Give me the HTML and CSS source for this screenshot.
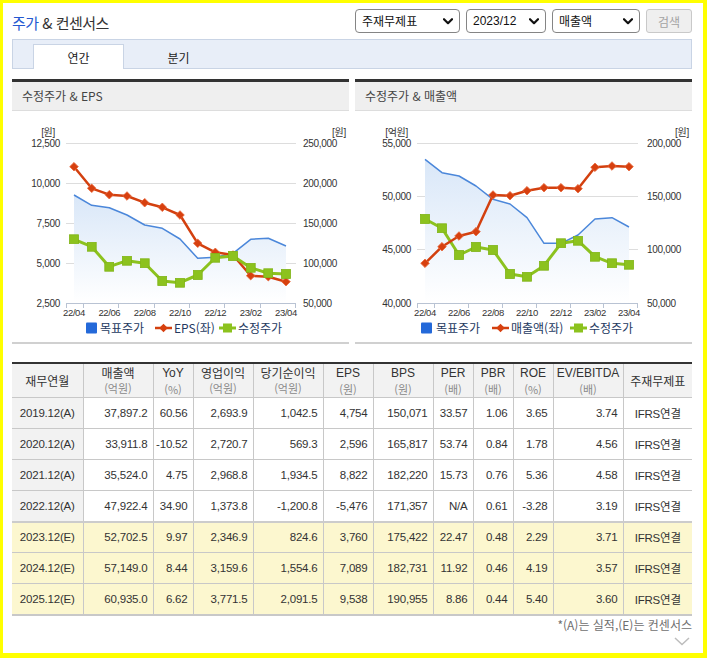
FILE: index.html
```html
<!DOCTYPE html>
<html lang="ko">
<head>
<meta charset="utf-8">
<title>주가 &amp; 컨센서스</title>
<link rel="stylesheet" href="styles.css">
</head>
<body>
<div class="frame">
  <div class="topbar">
    <h2 class="title"><span class="accent">주가</span> &amp; 컨센서스</h2>
    <div class="controls">
      <div class="sel sel-a"><span>주재무제표</span><svg class="caret" width="10" height="7" viewBox="0 0 10 7"><polyline points="1,1.2 5,5.2 9,1.2"/></svg></div>
      <div class="sel sel-b"><span class="num">2023/12</span><svg class="caret" width="10" height="7" viewBox="0 0 10 7"><polyline points="1,1.2 5,5.2 9,1.2"/></svg></div>
      <div class="sel sel-c"><span>매출액</span><svg class="caret" width="10" height="7" viewBox="0 0 10 7"><polyline points="1,1.2 5,5.2 9,1.2"/></svg></div>
      <div class="btn">검색</div>
    </div>
  </div>

  <div class="tabs">
    <div class="tab active">연간</div>
    <div class="tab">분기</div>
  </div>

  <div class="charts">
    <div class="panel">
      <div class="panel-head">수정주가 &amp; EPS</div>
      <svg class="chart" width="337" height="231" viewBox="0 0 337 231">
        <defs>
          <linearGradient id="areaFill" x1="0" y1="0" x2="0" y2="1">
            <stop offset="0" stop-color="#d9e7f8"/>
            <stop offset="1" stop-color="#ffffff"/>
          </linearGradient>
          <marker id="dia" viewBox="-5 -5 10 10" markerWidth="10" markerHeight="10" markerUnits="userSpaceOnUse" refX="0" refY="0">
            <path d="M0,-4.3 L4.3,0 L0,4.3 L-4.3,0Z" fill="#d7400f" stroke="#e8683c" stroke-width="0.8"/>
          </marker>
          <marker id="sq" viewBox="-5 -5 10 10" markerWidth="10" markerHeight="10" markerUnits="userSpaceOnUse" refX="0" refY="0">
            <rect x="-4.5" y="-4.5" width="9" height="9" fill="#8cc21e" stroke="#7fb316" stroke-width="0.8"/>
          </marker>
        </defs>
        <g class="grid">
          <line x1="54" y1="32.5" x2="284" y2="32.5"/>
          <line x1="54" y1="72.5" x2="284" y2="72.5"/>
          <line x1="54" y1="112.5" x2="284" y2="112.5"/>
          <line x1="54" y1="152.5" x2="284" y2="152.5"/>
        </g>
        <polygon class="area" points="62,84 79.7,94.3 97.3,96.7 115,104 132.7,114 150.3,117.3 168,128 185.7,147.3 203.3,146.3 221,142.3 238.7,128.3 256.3,127.3 274,135 274,192 62,192"/>
        <g class="axis">
          <line x1="54" y1="192.5" x2="284" y2="192.5"/>
          <line x1="54.5" y1="192" x2="54.5" y2="197"/>
          <line x1="71.5" y1="192" x2="71.5" y2="197"/>
          <line x1="106.5" y1="192" x2="106.5" y2="197"/>
          <line x1="142.5" y1="192" x2="142.5" y2="197"/>
          <line x1="177.5" y1="192" x2="177.5" y2="197"/>
          <line x1="212.5" y1="192" x2="212.5" y2="197"/>
          <line x1="248.5" y1="192" x2="248.5" y2="197"/>
          <line x1="283.5" y1="192" x2="283.5" y2="197"/>
        </g>
        <polyline class="l-blue" points="62,84 79.7,94.3 97.3,96.7 115,104 132.7,114 150.3,117.3 168,128 185.7,147.3 203.3,146.3 221,142.3 238.7,128.3 256.3,127.3 274,135"/>
        <polyline class="l-red" points="62,55.7 79.7,77.3 97.3,83.7 115,85 132.7,91.7 150.3,96.3 168,104 185.7,132.3 203.3,141.3 221,144 238.7,164.7 256.3,165.7 274,170.7"/>
        <polyline class="l-green" points="62,128.3 79.7,135.7 97.3,155.7 115,149.7 132.7,152.3 150.3,170 168,171.7 185.7,164 203.3,146.7 221,145 238.7,156.7 256.3,162.3 274,163"/>
        <text class="unit" x="43" y="25" text-anchor="end">[원]</text>
        <text class="unit" x="320" y="25">[원]</text>
        <g class="ax" text-anchor="end">
          <text x="48" y="36">12,500</text>
          <text x="48" y="76">10,000</text>
          <text x="48" y="116">7,500</text>
          <text x="48" y="156">5,000</text>
          <text x="48" y="196">2,500</text>
        </g>
        <g class="ax">
          <text x="291" y="36">250,000</text>
          <text x="291" y="76">200,000</text>
          <text x="291" y="116">150,000</text>
          <text x="291" y="156">100,000</text>
          <text x="291" y="196">50,000</text>
        </g>
        <g class="xl" text-anchor="middle">
          <text x="62" y="205">22/04</text>
          <text x="97.3" y="205">22/06</text>
          <text x="132.7" y="205">22/08</text>
          <text x="168" y="205">22/10</text>
          <text x="203.3" y="205">22/12</text>
          <text x="238.7" y="205">23/02</text>
          <text x="274" y="205">23/04</text>
        </g>
        <g class="legend">
          <rect x="74" y="211.5" width="11" height="11" rx="1" fill="#2469d9"/>
          <text x="88" y="221.5">목표주가</text>
          <polyline class="l-red" points="143,217 151.5,217 160,217" marker-start="none" marker-end="none"/>
          <path d="M151.5,212.7 L155.8,217 L151.5,221.3 L147.2,217Z" fill="#d7400f"/>
          <text x="162" y="221.5">EPS(좌)</text>
          <line class="lg-green" x1="207" y1="217" x2="224" y2="217"/>
          <rect x="211" y="212.5" width="9" height="9" fill="#8cc21e"/>
          <text x="226" y="221.5">수정주가</text>
        </g>
      </svg>
    </div>

    <div class="panel">
      <div class="panel-head">수정주가 &amp; 매출액</div>
      <svg class="chart" width="337" height="231" viewBox="0 0 337 231">
        <g class="grid">
          <line x1="62" y1="32.5" x2="283" y2="32.5"/>
          <line x1="62" y1="85.5" x2="283" y2="85.5"/>
          <line x1="62" y1="138.5" x2="283" y2="138.5"/>
        </g>
        <polygon class="area" points="70,48.3 87,61.7 104,65 121,75 138,88.3 155,93 172,106.7 189,132.3 206,132.3 223,124 240,108 257,106.7 274,116 274,192 70,192"/>
        <g class="axis">
          <line x1="62" y1="192.5" x2="283" y2="192.5"/>
          <line x1="62.5" y1="192" x2="62.5" y2="197"/>
          <line x1="79.5" y1="192" x2="79.5" y2="197"/>
          <line x1="113.5" y1="192" x2="113.5" y2="197"/>
          <line x1="147.5" y1="192" x2="147.5" y2="197"/>
          <line x1="181.5" y1="192" x2="181.5" y2="197"/>
          <line x1="215.5" y1="192" x2="215.5" y2="197"/>
          <line x1="248.5" y1="192" x2="248.5" y2="197"/>
          <line x1="282.5" y1="192" x2="282.5" y2="197"/>
        </g>
        <polyline class="l-blue" points="70,48.3 87,61.7 104,65 121,75 138,88.3 155,93 172,106.7 189,132.3 206,132.3 223,124 240,108 257,106.7 274,116"/>
        <polyline class="l-green" points="70,108 87,117.3 104,144 121,136 138,139 155,163 172,165.7 189,154.7 206,132.3 223,129.7 240,145.7 257,152.3 274,153.7"/>
        <polyline class="l-red" points="70,152.3 87,135.7 104,125 121,120.7 138,84 155,84.7 172,79.7 189,76.7 206,76.7 223,77.7 240,56.3 257,55 274,55.7"/>
        <text class="unit" x="53" y="25" text-anchor="end">[억원]</text>
        <text class="unit" x="320" y="25">[원]</text>
        <g class="ax" text-anchor="end">
          <text x="56" y="36">55,000</text>
          <text x="56" y="89">50,000</text>
          <text x="56" y="142">45,000</text>
          <text x="56" y="196">40,000</text>
        </g>
        <g class="ax">
          <text x="292" y="36">200,000</text>
          <text x="292" y="89">150,000</text>
          <text x="292" y="142">100,000</text>
          <text x="292" y="196">50,000</text>
        </g>
        <g class="xl" text-anchor="middle">
          <text x="70" y="205">22/04</text>
          <text x="104" y="205">22/06</text>
          <text x="138" y="205">22/08</text>
          <text x="172" y="205">22/10</text>
          <text x="206" y="205">22/12</text>
          <text x="240" y="205">23/02</text>
          <text x="274" y="205">23/04</text>
        </g>
        <g class="legend">
          <rect x="66" y="211.5" width="11" height="11" rx="1" fill="#2469d9"/>
          <text x="81" y="221.5">목표주가</text>
          <line class="lg-red" x1="137" y1="217" x2="154" y2="217"/>
          <path d="M145.5,212.7 L149.8,217 L145.5,221.3 L141.2,217Z" fill="#d7400f"/>
          <text x="156" y="221.5">매출액(좌)</text>
          <line class="lg-green" x1="215" y1="217" x2="232" y2="217"/>
          <rect x="219" y="212.5" width="9" height="9" fill="#8cc21e"/>
          <text x="234" y="221.5">수정주가</text>
        </g>
      </svg>
    </div>
  </div>

  <table class="fin">
    <colgroup>
      <col class="c71"><col class="c70"><col class="c40"><col class="c60"><col class="c70"><col class="c50">
      <col class="c60"><col class="c40"><col class="c40"><col class="c40"><col class="c70"><col class="c69">
    </colgroup>
    <thead>
      <tr>
        <th>재무연월</th>
        <th>매출액<br><span class="u">(억원)</span></th>
        <th><span class="en">YoY</span><br><span class="u">(%)</span></th>
        <th>영업이익<br><span class="u">(억원)</span></th>
        <th>당기순이익<br><span class="u">(억원)</span></th>
        <th><span class="en">EPS</span><br><span class="u">(원)</span></th>
        <th><span class="en">BPS</span><br><span class="u">(원)</span></th>
        <th><span class="en">PER</span><br><span class="u">(배)</span></th>
        <th><span class="en">PBR</span><br><span class="u">(배)</span></th>
        <th><span class="en">ROE</span><br><span class="u">(%)</span></th>
        <th><span class="en">EV/EBITDA</span><br><span class="u">(배)</span></th>
        <th>주재무제표</th>
      </tr>
    </thead>
    <tbody>
      <tr><td>2019.12(A)</td><td>37,897.2</td><td>60.56</td><td>2,693.9</td><td>1,042.5</td><td>4,754</td><td>150,071</td><td>33.57</td><td>1.06</td><td>3.65</td><td>3.74</td><td>IFRS연결</td></tr>
      <tr><td>2020.12(A)</td><td>33,911.8</td><td>-10.52</td><td>2,720.7</td><td>569.3</td><td>2,596</td><td>165,817</td><td>53.74</td><td>0.84</td><td>1.78</td><td>4.56</td><td>IFRS연결</td></tr>
      <tr><td>2021.12(A)</td><td>35,524.0</td><td>4.75</td><td>2,968.8</td><td>1,934.5</td><td>8,822</td><td>182,220</td><td>15.73</td><td>0.76</td><td>5.36</td><td>4.58</td><td>IFRS연결</td></tr>
      <tr><td>2022.12(A)</td><td>47,922.4</td><td>34.90</td><td>1,373.8</td><td>-1,200.8</td><td>-5,476</td><td>171,357</td><td>N/A</td><td>0.61</td><td>-3.28</td><td>3.19</td><td>IFRS연결</td></tr>
      <tr class="est first-est"><td>2023.12(E)</td><td>52,702.5</td><td>9.97</td><td>2,346.9</td><td>824.6</td><td>3,760</td><td>175,422</td><td>22.47</td><td>0.48</td><td>2.29</td><td>3.71</td><td>IFRS연결</td></tr>
      <tr class="est"><td>2024.12(E)</td><td>57,149.0</td><td>8.44</td><td>3,159.6</td><td>1,554.6</td><td>7,089</td><td>182,731</td><td>11.92</td><td>0.46</td><td>4.19</td><td>3.57</td><td>IFRS연결</td></tr>
      <tr class="est"><td>2025.12(E)</td><td>60,935.0</td><td>6.62</td><td>3,771.5</td><td>2,091.5</td><td>9,538</td><td>190,955</td><td>8.86</td><td>0.44</td><td>5.40</td><td>3.60</td><td>IFRS연결</td></tr>
    </tbody>
  </table>
  <div class="note">*(A)는 실적,(E)는 컨센서스</div>
  <div class="more"><svg width="16" height="9" viewBox="0 0 16 9"><polyline points="1,1 8,7.5 15,1"/></svg></div>
</div>
</body>
</html>
```

FILE: styles.css
```css
* { box-sizing: border-box; }
html, body { margin: 0; padding: 0; }
body {
  background: #ffff00;
  width: 707px;
  height: 658px;
  overflow: hidden;
  font-family: "Liberation Sans", "Noto Sans CJK KR", sans-serif;
  color: #333;
}
.frame {
  margin: 3px 0 0 3px;
  width: 700px;
  height: 650px;
  background: #fff;
  padding: 6px 11px 0 9px;
}

/* top bar */
.topbar {
  display: flex;
  justify-content: space-between;
  align-items: center;
  height: 24px;
}
.title {
  margin: 0;
  padding-top: 4px;
  font-family: "Noto Sans CJK KR", sans-serif;
  font-weight: normal;
  font-size: 15px;
  line-height: 20px;
  letter-spacing: -0.5px;
  color: #333;
}
.accent { color: #2458d1; }
.controls {
  display: flex;
  gap: 6px;
}
.sel {
  height: 24px;
  border: 1px solid #858585;
  border-radius: 4px;
  background: #fff;
  display: flex;
  align-items: center;
  justify-content: space-between;
  padding: 0 6px 0 6px;
  font-family: "Noto Sans CJK KR", sans-serif;
  font-size: 12px;
  line-height: 14px;
  color: #111;
}
.sel .num { font-family: "Liberation Sans", sans-serif; font-size: 12px; }
.sel-a { width: 105px; }
.sel-b { width: 80px; }
.sel-c { width: 88px; }
.caret { display: block; }
.caret polyline { fill: none; stroke: #111; stroke-width: 2.2; stroke-linecap: round; stroke-linejoin: round; }
.btn {
  width: 46px;
  height: 24px;
  border: 1px solid #c9c9c9;
  border-radius: 3px;
  background: #efefef;
  color: #a3a3a3;
  font-family: "Noto Sans CJK KR", sans-serif;
  font-size: 12px;
  display: flex;
  align-items: center;
  justify-content: center;
}

/* tabs */
.tabs {
  margin-top: 6px;
  height: 30px;
  background: #e8eef8;
  border: 1px solid #c9d4e5;
  display: flex;
  align-items: flex-end;
  padding-left: 20px;
  gap: 9px;
}
.tab {
  width: 91px;
  height: 25px;
  margin-bottom: -1px;
  display: flex;
  align-items: center;
  justify-content: center;
  font-family: "Noto Sans CJK KR", sans-serif;
  font-size: 12px;
  color: #222;
  border: 1px solid transparent;
  border-bottom: none;
}
.tab.active {
  background: #fff;
  border-color: #c9d4e5;
}

/* chart panels */
.charts {
  margin-top: 10px;
  display: flex;
  gap: 6px;
}
.panel {
  width: 337px;
  border-top: 3px solid #333;
  border-bottom: 2px solid #d0d0d0;
}
.panel-head {
  height: 29px;
  background: #efefef;
  border-bottom: 1px solid #dddddd;
  padding-left: 10px;
  font-family: "Noto Sans CJK KR", sans-serif;
  font-size: 12px;
  line-height: 28px;
  color: #444;
}
.chart { display: block; }
.grid line { stroke: #dddddd; stroke-width: 1; }
.axis line { stroke: #b9c3d3; stroke-width: 1; }
.area { fill: url(#areaFill); stroke: none; }
.l-blue { fill: none; stroke: #4b87da; stroke-width: 1.5; stroke-linejoin: round; }
.l-red { fill: none; stroke: #d3400f; stroke-width: 2.5; stroke-linejoin: round; marker-start: url(#dia); marker-mid: url(#dia); marker-end: url(#dia); }
.l-green { fill: none; stroke: #8cc21e; stroke-width: 3; stroke-linejoin: round; marker-start: url(#sq); marker-mid: url(#sq); marker-end: url(#sq); }
.legend .l-red { marker-start: none; marker-mid: none; marker-end: none; }
.lg-red { stroke: #d3400f; stroke-width: 2.5; }
.lg-green { stroke: #8cc21e; stroke-width: 3; }
.ax text, .unit {
  font-family: "Liberation Sans", "Noto Sans CJK KR", sans-serif;
  font-size: 10px;
  letter-spacing: -0.3px;
  fill: #333;
}
.xl text {
  font-family: "Liberation Sans", sans-serif;
  font-size: 9.5px;
  letter-spacing: -0.4px;
  fill: #333;
}
.legend text {
  font-family: "Noto Sans CJK KR", sans-serif;
  font-size: 12px;
  fill: #24395f;
}

/* table */
.fin {
  margin-top: 18px;
  width: 680px;
  table-layout: fixed;
  border-collapse: collapse;
  border-top: 2px solid #333;
  border-bottom: 2px solid #c8c8c8;
  font-size: 11.5px;
  letter-spacing: -0.2px;
}
.c71 { width: 71px; }
.c70 { width: 70px; }
.c69 { width: 69px; }
.c60 { width: 60px; }
.c50 { width: 50px; }
.c40 { width: 40px; }
.fin th, .fin td {
  border: 1px solid #c8c8c8;
  padding: 0 5px 0 0;
  white-space: nowrap;
}
.fin th:first-child, .fin td:first-child { border-left: none; }
.fin th:last-child, .fin td:last-child { border-right: none; }
.fin thead th {
  height: 32px;
  padding: 0;
  background: #f2f2f2;
  font-weight: normal;
  text-align: center;
  font-family: "Noto Sans CJK KR", sans-serif;
  font-size: 12px;
  line-height: 15px;
  color: #333;
  letter-spacing: 0;
}
.fin thead th .en { font-family: "Liberation Sans", sans-serif; }
.fin thead th .u { font-size: 11px; color: #8a8a8a; }
.fin tbody td {
  height: 31px;
  text-align: right;
  color: #333;
}
.fin tbody td:first-child {
  text-align: center;
  padding: 0;
  background: #f2f2f2;
}
.fin tbody td:last-child {
  text-align: center;
  padding: 0;
}
.fin tr.est td,
.fin tr.est td:first-child { background: #fcf7cf; }
.fin tr.first-est td { border-top: 2px solid #cccccc; }

.note {
  margin-top: 1px;
  height: 16px;
  text-align: right;
  font-family: "Noto Sans CJK KR", sans-serif;
  font-size: 12px;
  line-height: 16px;
  color: #6f6f6f;
}
.more {
  margin-top: 4px;
  display: flex;
  justify-content: flex-end;
  padding-right: 2px;
}
.more svg { display: block; }
.more polyline { fill: none; stroke: #bdbdbd; stroke-width: 1.5; }
```
